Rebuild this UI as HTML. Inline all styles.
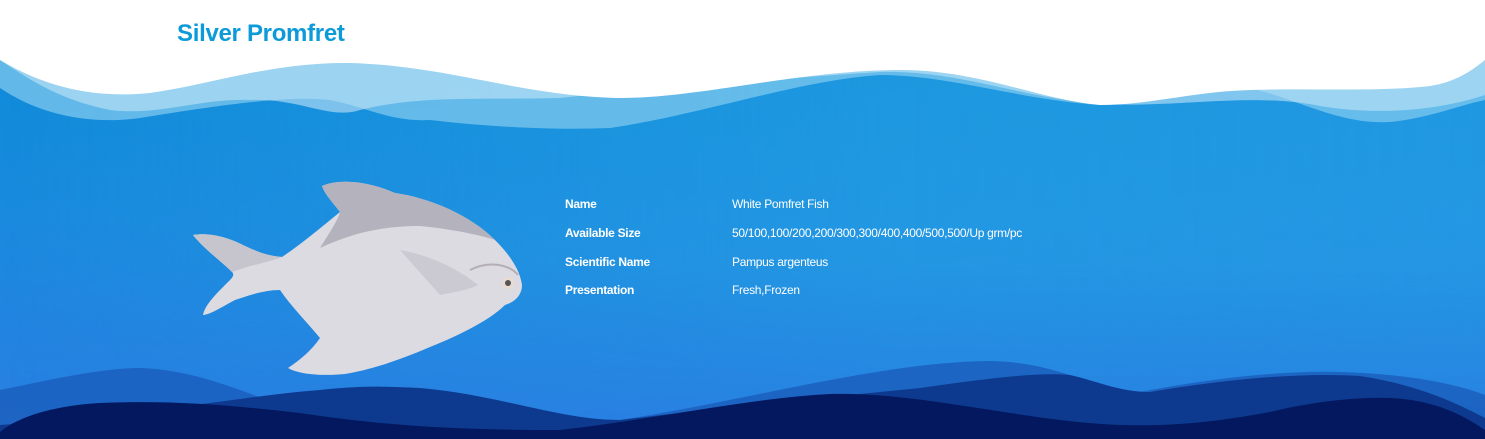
<!DOCTYPE html>
<html><head><style>
html,body{margin:0;padding:0;width:1485px;height:439px;overflow:hidden;background:#fff;font-family:"Liberation Sans",Arial,sans-serif}
.wrap{position:relative;width:1485px;height:439px}
svg.bg{position:absolute;left:0;top:0}
h1{position:absolute;left:177px;top:20px;margin:0;font-size:24px;font-weight:bold;color:#0d9ad9;letter-spacing:-0.3px}
.row{position:absolute;left:565px;font-size:12px;color:#fff;letter-spacing:-0.3px}
.row b{display:inline-block;width:167px}
</style></head><body><div class="wrap">
<svg class="bg" width="1485" height="439" viewBox="0 0 1485 439">
<defs>
<linearGradient id="sea" x1="0" y1="0" x2="0" y2="1">
<stop offset="0" stop-color="#0b8cd6"/><stop offset="0.5" stop-color="#1a8ade"/><stop offset="1" stop-color="#2a7ee2"/>
</linearGradient>
<linearGradient id="sea2" x1="0" y1="0" x2="1" y2="0">
<stop offset="0" stop-color="#2aa5e6" stop-opacity="0"/><stop offset="0.6" stop-color="#2aa5e6" stop-opacity="0.5"/><stop offset="1" stop-color="#2aa0e6" stop-opacity="0.6"/>
</linearGradient>
<linearGradient id="fade" x1="0" y1="0" x2="0" y2="1">
<stop offset="0" stop-color="#fff"/><stop offset="0.6" stop-color="#fff"/><stop offset="1" stop-color="#000"/>
</linearGradient>
<mask id="m"><rect width="1485" height="439" fill="url(#fade)"/></mask>
</defs>
<rect width="1485" height="439" fill="url(#sea)"/>
<rect width="1485" height="439" fill="url(#sea2)" mask="url(#m)"/>
<path d="M0 60 L0 88 C40 115 90 125 140 118 C220 105 290 95 330 100 C370 108 390 122 430 120 C500 128 560 130 610 128 C700 115 800 80 880 75 C950 75 1020 100 1100 105 C1160 105 1200 85 1250 88 C1300 100 1340 125 1390 122 C1430 118 1460 105 1485 100 L1485 60 Z" fill="#7ec8ee" opacity="0.75"/>
<path d="M0 60 C30 80 60 100 110 110 C160 116 200 98 250 100 C300 98 330 120 360 110 C420 95 480 100 560 98 C650 88 760 80 880 72 C960 70 1020 98 1100 104 C1180 108 1250 92 1320 106 C1380 116 1440 110 1485 95 L1485 60 Z" fill="#c2e4f6" opacity="0.6"/>
<path d="M0 0 H1485 V60 C1470 72 1455 82 1430 86 C1380 92 1300 88 1250 90 C1190 92 1150 105 1100 105 C1040 100 980 70 900 70 C800 70 700 98 620 98 C520 96 450 66 350 63 C270 62 210 85 150 93 C100 98 50 90 0 60 Z" fill="#fff"/>
<path d="M0 390 C50 380 100 368 140 368 C200 370 250 395 300 412 L620 420 C750 400 880 362 990 361 C1060 362 1100 392 1135 393 C1200 380 1280 370 1340 372 C1410 374 1460 385 1485 395 V439 H0 Z" fill="#1b5fbd" opacity="0.85"/>
<path d="M0 425 C150 415 250 395 320 390 C360 386 380 386 420 388 C500 395 560 420 620 420 C700 410 850 395 920 388 C990 378 1040 372 1070 375 C1100 382 1120 392 1150 392 C1220 380 1300 372 1360 376 C1420 385 1460 405 1485 418 V439 H0 Z" fill="#0d3a8e"/>
<path d="M0 432 C20 415 60 405 100 403 C170 400 230 405 300 413 C380 425 450 430 560 430 C650 420 750 398 830 394 C900 392 980 410 1060 420 C1140 430 1200 425 1270 412 C1320 400 1360 397 1390 398 C1440 400 1470 420 1485 430 V439 H0 Z" fill="#03185e"/>
<g>
<path d="M193 235 C210 232 230 238 245 246 C258 252 268 256 282 257 C300 245 318 230 340 212 C335 205 325 195 322 186 C340 178 370 182 395 193 C430 198 470 215 495 240 C510 255 520 270 522 285 C522 295 515 302 505 305 C490 320 460 335 430 347 C400 360 370 370 345 374 C325 376 300 375 288 368 C300 360 312 350 320 338 C305 320 290 305 280 290 C265 290 250 295 235 300 C225 305 210 315 203 315 C205 305 215 295 228 282 C232 278 235 275 232 272 C220 260 205 250 193 235 Z" fill="#dcdbe1"/>
<path d="M322 186 C340 178 370 182 395 193 C430 198 470 215 495 240 C470 232 440 228 420 226 C380 226 350 234 320 248 C330 232 338 220 340 212 C335 205 325 195 322 186 Z" fill="#b4b3bd"/>
<path d="M193 235 C210 232 230 238 245 246 C258 252 268 256 282 257 C270 262 250 265 232 272 C220 260 205 250 193 235 Z" fill="#c6c5cd"/>
<path d="M400 250 C430 255 460 270 478 285 C468 290 455 292 440 295 Z" fill="#cbcad2"/>
<circle cx="508" cy="283" r="6" fill="#e8dcd0"/><circle cx="508" cy="283" r="3" fill="#555"/>
<path d="M470 270 C490 260 510 265 518 275" stroke="#9a8f99" stroke-width="2" fill="none" opacity="0.6"/>
</g>
</svg>
<h1>Silver Promfret</h1>
<div class="row" style="top:197px"><b>Name</b>White Pomfret Fish</div>
<div class="row" style="top:226px"><b>Available Size</b>50/100,100/200,200/300,300/400,400/500,500/Up grm/pc</div>
<div class="row" style="top:255px"><b>Scientific Name</b>Pampus argenteus</div>
<div class="row" style="top:283px"><b>Presentation</b>Fresh,Frozen</div>
</div></body></html>
